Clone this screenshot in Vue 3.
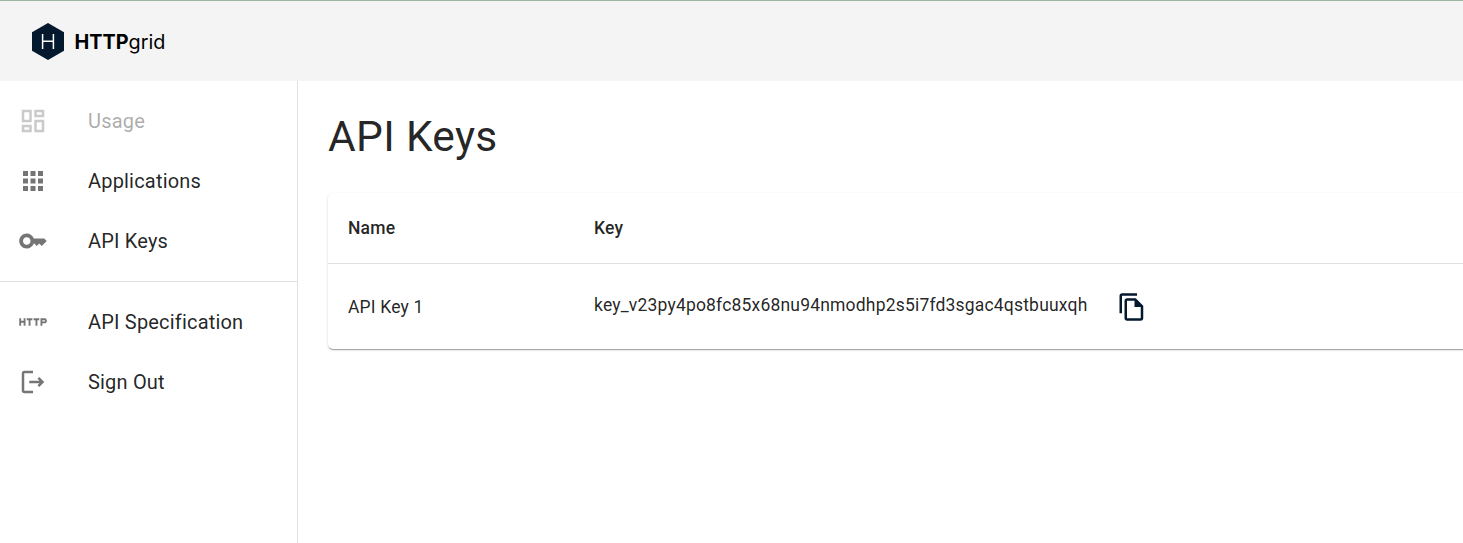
<script setup>
const nav = [
  {
    label: 'Usage',
    disabled: true,
    icon: 'M19 5v2h-4V5h4M9 5v6H5V5h4m10 8v6h-4v-6h4M9 17v2H5v-2h4M21 3h-8v6h8V3zM11 3H3v10h8V3zm10 8h-8v10h8V11zm-10 4H3v6h8v-6z',
  },
  {
    label: 'Applications',
    icon: 'M4 8h4V4H4v4zm6 12h4v-4h-4v4zm-6 0h4v-4H4v4zm0-6h4v-4H4v4zm6 0h4v-4h-4v4zm6-10v4h4V4h-4zm-6 4h4V4h-4v4zm6 6h4v-4h-4v4zm0 6h4v-4h-4v4z',
  },
  {
    label: 'API Keys',
    icon: 'M21 10h-8.35C11.83 7.67 9.61 6 7 6c-3.31 0-6 2.69-6 6s2.69 6 6 6c2.61 0 4.83-1.67 5.65-4H13l2 2 2-2 2 2 4-4.04L21 10zM7 15c-1.65 0-3-1.35-3-3s1.35-3 3-3 3 1.35 3 3-1.35 3-3 3z',
  },
]
const secondary = [
  {
    label: 'API Specification',
    icon: 'M4.5 11h-2V9H1v6h1.5v-2.5h2V15H6V9H4.5v2zm2.5-.5h1.5V15H10v-4.5h1.5V9H7v1.5zm5.5 0H14V15h1.5v-4.5H17V9h-4.5v1.5zm9-1.5H18v6h1.5v-2h2c.8 0 1.5-.7 1.5-1.5v-1c0-.8-.7-1.5-1.5-1.5zm0 2.5h-2v-1h2v1z',
  },
  {
    label: 'Sign Out',
    icon: 'M17 8l-1.41 1.41L17.17 11H9v2h8.17l-1.58 1.58L17 16l4-4-4-4zM5 5h7V3H5c-1.1 0-2 .9-2 2v14c0 1.1.9 2 2 2h7v-2H5V5z',
  },
]
const keys = [{ name: 'API Key 1', key: 'key_v23py4po8fc85x68nu94nmodhp2s5i7fd3sgac4qstbuuxqh' }]
</script>

<template>
  <div class="app">
    <header class="topbar">
      <svg class="mark" viewBox="0 0 32 37">
        <path d="M16 0 32 9.2v18.6L16 37 0 27.8V9.2z" fill="#04192e" />
        <path d="M10.6 11v15M21.4 11v15M10.6 18.3h10.8" stroke="#fff" stroke-width="1.5" fill="none" />
      </svg>
      <span class="brand"><b>HTTP</b>grid</span>
    </header>
    <div class="body">
      <nav class="sidebar">
        <ul class="group">
          <li v-for="item in nav" :key="item.label" class="item" :class="{ disabled: item.disabled }">
            <svg class="icon" viewBox="0 0 24 24"><path :d="item.icon" /></svg>
            <span class="label">{{ item.label }}</span>
          </li>
        </ul>
        <ul class="group second">
          <li v-for="item in secondary" :key="item.label" class="item">
            <svg class="icon" viewBox="0 0 24 24"><path :d="item.icon" /></svg>
            <span class="label">{{ item.label }}</span>
          </li>
        </ul>
      </nav>
      <main class="content">
        <h1 class="title">API Keys</h1>
        <section class="card">
          <div class="row head">
            <span>Name</span>
            <span>Key</span>
          </div>
          <div v-for="k in keys" :key="k.name" class="row entry">
            <span>{{ k.name }}</span>
            <div class="keycell">
              <span class="keytext">{{ k.key }}</span>
              <svg class="copy" viewBox="0 0 24 24">
                <path d="M16 1H4c-1.1 0-2 .9-2 2v14h2V3h12V1zm-1 4H8c-1.1 0-1.99.9-1.99 2L6 21c0 1.1.89 2 1.99 2H19c1.1 0 2-.9 2-2V11l-6-6zM8 21V7h6v5h5v9H8z" />
              </svg>
            </div>
          </div>
        </section>
      </main>
    </div>
  </div>
</template>

<style>
body {
  margin: 0;
  background: #fff;
}
</style>

<style scoped>
.app {
  height: 543px;
  overflow: hidden;
  display: flex;
  flex-direction: column;
  box-sizing: border-box;
  font-family: Roboto, "Liberation Sans", sans-serif;
  color: rgba(0, 0, 0, 0.87);
}
.topbar {
  height: 81px;
  flex: none;
  box-sizing: border-box;
  border-top: 1px solid #9fb59f;
  background: #f4f4f4;
  display: flex;
  align-items: center;
  padding-left: 32px;
}
.mark {
  width: 32px;
  height: 37px;
}
.brand {
  margin-left: 10.5px;
  padding-top: 2px;
  font-family: Inter, sans-serif;
  font-size: 19.8px;
  line-height: 24px;
  color: #000;
}
.body {
  flex: 1;
  display: flex;
  min-height: 0;
}
.sidebar {
  width: 297px;
  flex: none;
  border-right: 1px solid #e0e0e0;
}
.group {
  list-style: none;
  margin: 0;
  padding: 10px 0;
}
.second {
  border-top: 1px solid #e0e0e0;
}
.item {
  height: 60px;
  display: flex;
  align-items: center;
  padding-left: 18px;
}
.icon {
  width: 30px;
  height: 30px;
  margin-right: 40px;
  fill: rgba(0, 0, 0, 0.54);
}
.label {
  font-size: 20px;
  line-height: 30px;
  letter-spacing: 0.00938em;
}
.disabled {
  opacity: 0.38;
}
.content {
  flex: 1;
  min-width: 0;
  padding: 30px 0 0 30px;
}
.title {
  margin: 0;
  font-size: 42.5px;
  line-height: 52px;
  font-weight: 400;
  letter-spacing: 0.00735em;
}
.card {
  margin: 30px -30px 0 0;
  border-radius: 5px;
  background: #fff;
  box-shadow: 0 2px 1px -1px rgba(0, 0, 0, 0.2), 0 1px 1px rgba(0, 0, 0, 0.14), 0 1px 3px rgba(0, 0, 0, 0.12);
}
.row {
  display: grid;
  grid-template-columns: 246px 1fr;
  align-items: center;
  padding-left: 20px;
  font-size: 17.5px;
  letter-spacing: 0.01071em;
}
.head {
  height: 70px;
  border-bottom: 1px solid #e0e0e0;
  font-weight: 500;
}
.entry {
  height: 85px;
}
.keycell {
  display: flex;
  align-items: center;
}
.keytext {
  margin-bottom: 4px;
}
.copy {
  width: 30px;
  height: 30px;
  margin-left: 30px;
  fill: #04192e;
}
</style>
